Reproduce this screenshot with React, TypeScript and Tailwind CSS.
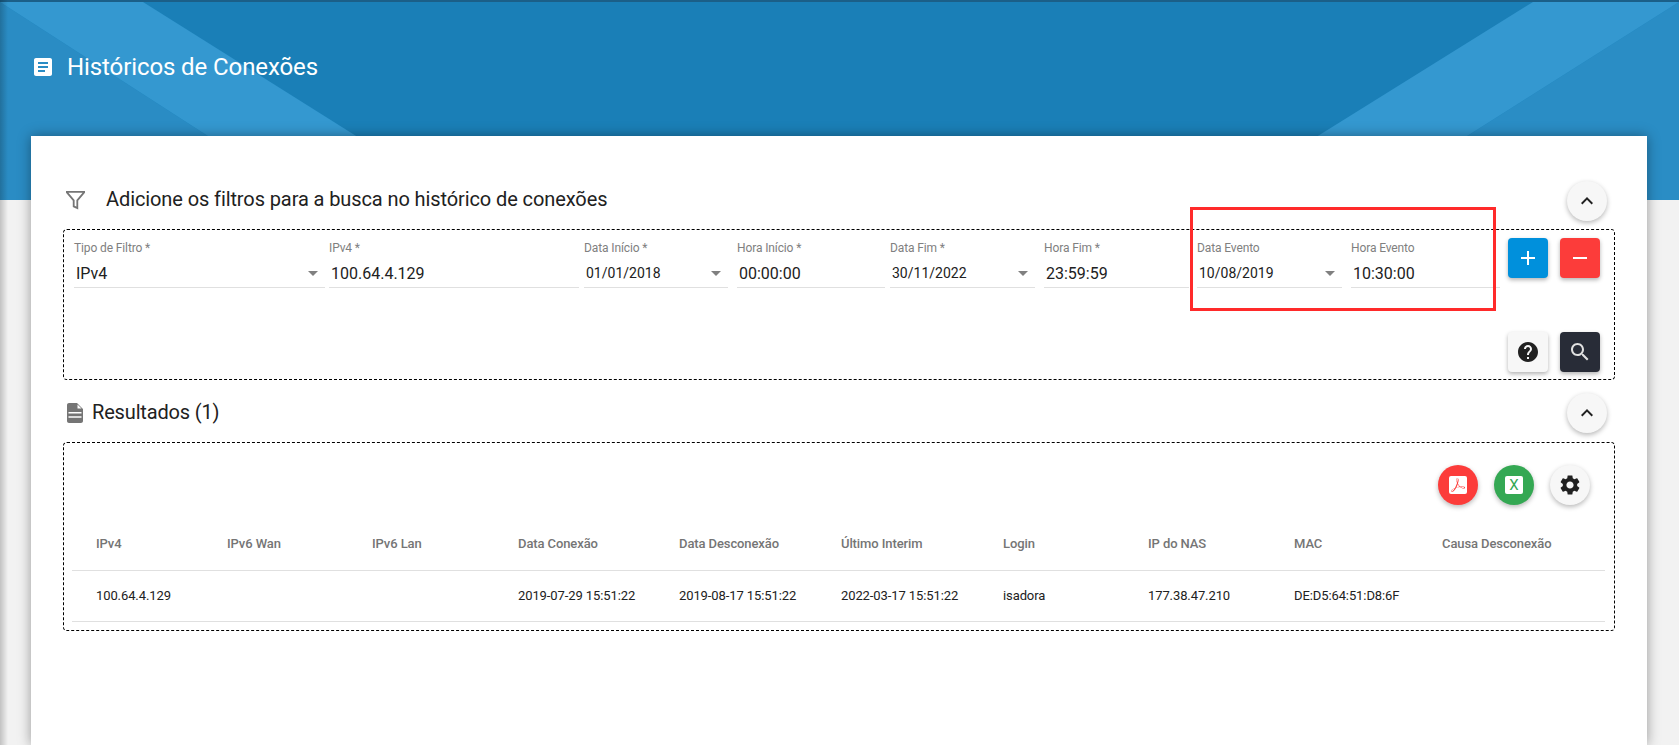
import React from "react";
import { SiAdobeacrobatreader } from "react-icons/si";

const P = {
  article: "M19 3H5c-1.1 0-2 .9-2 2v14c0 1.1.9 2 2 2h14c1.1 0 2-.9 2-2V5c0-1.1-.9-2-2-2zm-5 14H7v-2h7v2zm3-4H7v-2h10v2zm0-4H7V7h10v2z",
  desc: "M6 2h8l6 6v12c0 1.1-.9 2-2 2H6c-1.1 0-2-.9-2-2V4c0-1.1.9-2 2-2zM5.5 11v1.5h13V11h-13zM5.5 15.3v1.5h13v-1.5h-13zM14.5 3.6v4h4l-4-4z",
  help: "M12 2C6.48 2 2 6.48 2 12s4.48 10 10 10 10-4.48 10-10S17.52 2 12 2zm1 17h-2v-2h2v2zm2.07-7.75l-.9.92C13.45 12.9 13 13.5 13 15h-2v-.5c0-1.1.45-2.1 1.17-2.83l1.24-1.26c.37-.36.59-.86.59-1.41 0-1.1-.9-2-2-2s-2 .9-2 2H8c0-2.21 1.79-4 4-4s4 1.79 4 4c0 .88-.36 1.68-.93 2.25z",
  search: "M15.5 14h-.79l-.28-.27C15.41 12.59 16 11.11 16 9.5 16 5.91 13.09 3 9.5 3S3 5.91 3 9.5 5.91 16 9.5 16c1.61 0 3.09-.59 4.23-1.57l.27.28v.79l5 4.99L20.49 19l-4.99-5zm-6 0C7.01 14 5 11.99 5 9.5S7.01 5 9.5 5 14 7.01 14 9.5 11.99 14 9.5 14z",
  gear: "M19.14 12.94c.04-.3.06-.61.06-.94 0-.32-.02-.64-.07-.94l2.03-1.58c.18-.14.23-.41.12-.61l-1.92-3.32c-.12-.22-.37-.29-.59-.22l-2.39.96c-.5-.38-1.03-.7-1.62-.94l-.36-2.54c-.04-.24-.24-.41-.48-.41h-3.84c-.24 0-.43.17-.47.41l-.36 2.54c-.59.24-1.13.57-1.62.94l-2.39-.96c-.22-.08-.47 0-.59.22L2.74 8.87c-.12.21-.08.47.12.61l2.03 1.58c-.05.3-.09.63-.09.94s.02.64.07.94l-2.03 1.58c-.18.14-.23.41-.12.61l1.92 3.32c.12.22.37.29.59.22l2.39-.96c.5.38 1.03.7 1.62.94l.36 2.54c.05.24.24.41.48.41h3.84c.24 0 .44-.17.47-.41l.36-2.54c.59-.24 1.13-.56 1.62-.94l2.39.96c.22.08.47 0 .59-.22l1.92-3.32c.12-.22.07-.47-.12-.61l-2.01-1.58zM12 15.6c-1.98 0-3.6-1.62-3.6-3.6s1.62-3.6 3.6-3.6 3.6 1.62 3.6 3.6-1.62 3.6-3.6 3.6z",
  less: "M12 8l-6 6 1.41 1.41L12 10.83l4.59 4.58L18 14z",
  add: "M19 13h-6v6h-2v-6H5v-2h6V5h2v6h6v2z",
  remove: "M19 13H5v-2h14v2z",
  arrow: "M7 10l5 5 5-5z",
};

function Icon({ d, className }: { d: string; className: string }) {
  return (
    <svg viewBox="0 0 24 24" className={className} fill="currentColor" fillRule="evenodd" aria-hidden="true">
      <path d={d} />
    </svg>
  );
}

function Collapse() {
  return (
    <button className="w-10 h-10 rounded-full bg-[#f7f7f7] shadow-[0_2px_5px_rgba(0,0,0,0.28)] flex items-center justify-center shrink-0 text-[#212121]">
      <Icon d={P.less} className="w-6 h-6" />
    </button>
  );
}

type F = { label: string; value: string; select?: boolean; cls: string };
const fields: F[] = [
  { label: "Tipo de Filtro *", value: "IPv4", select: true, cls: "w-[251px]" },
  { label: "IPv4 *", value: "100.64.4.129", cls: "w-[250px] ml-[4px]" },
  { label: "Data Início *", value: "01/01/2018", select: true, cls: "w-[144px] ml-[5px]" },
  { label: "Hora Início *", value: "00:00:00", cls: "w-[148px] ml-[9px]" },
  { label: "Data Fim *", value: "30/11/2022", select: true, cls: "w-[145px] ml-[5px]" },
  { label: "Hora Fim *", value: "23:59:59", cls: "w-[145px] ml-[9px]" },
  { label: "Data Evento", value: "10/08/2019", select: true, cls: "w-[145px] ml-[8px]" },
  { label: "Hora Evento", value: "10:30:00", cls: "w-[149px] ml-[9px]" },
];

function Field({ f }: { f: F }) {
  const small = f.select && f.value !== "IPv4";
  return (
    <div className={`${f.cls} h-[50px] shrink-0 border-b border-[#e0e0e0]`}>
      <div className="h-[20px] leading-[20px] text-[12px] tracking-[-0.12px] text-[#808080]">{f.label}</div>
      <div className="h-[29px] flex items-center justify-between pl-[2px] text-[#212121]">
        <span className={small ? "pt-[2px] text-[14px]" : "pt-[2px] text-[16px]"}>{f.value}</span>
        {f.select && <Icon d={P.arrow} className="w-6 h-6 text-[#808080]" />}
      </div>
    </div>
  );
}

const heads = ["IPv4", "IPv6 Wan", "IPv6 Lan", "Data Conexão", "Data Desconexão", "Último Interim", "Login", "IP do NAS", "MAC", "Causa Desconexão"];
const cells = ["100.64.4.129", "", "", "2019-07-29 15:51:22", "2019-08-17 15:51:22", "2022-03-17 15:51:22", "isadora", "177.38.47.210", "DE:D5:64:51:D8:6F", ""];

export default function App() {
  return (
    <div className="relative h-[745px] w-[1679px] overflow-hidden bg-[#f2f2f2] font-['Roboto',sans-serif]">
      <header className="relative h-[200px] bg-[#1a7fb7] border-t-2 border-[#1b5f88] overflow-hidden">
        <svg className="absolute inset-0 w-full h-full" viewBox="0 0 1679 200" preserveAspectRatio="none" aria-hidden="true">
          <polygon points="0,0 307,200 0,200" fill="#2a8cc4" />
          <polygon points="0,0 143,0 458,200 307,200" fill="#3498d0" />
          <polygon points="1679,0 1679,200 1366,200" fill="#2a8dc5" />
          <polygon points="1533,0 1679,0 1366,200 1215,200" fill="#3498d0" />
        </svg>
        <div className="relative flex items-center h-[130px] pl-[31px] text-white">
          <Icon d={P.article} className="w-6 h-6" />
          <h1 className="ml-[12px] text-[24px] leading-[32px] tracking-[-0.1px] font-normal">Históricos de Conexões</h1>
        </div>
      </header>

      <main className="relative ml-[31px] -mt-[64px] w-[1616px] h-[609px] bg-white shadow-[0_0_12px_rgba(0,0,0,0.38)] px-[32px] pt-[45px]">
        <div className="flex items-center h-10 pr-[8px]">
          <svg viewBox="1.5 2.5 21 19" className="ml-[3px] mb-[2px] w-[19px] h-[20px] text-[#757575]" fill="none" stroke="currentColor" strokeWidth="2" strokeLinejoin="miter" aria-hidden="true">
            <polygon points="22 3 2 3 10 12.46 10 19 14 21 14 12.46 22 3" />
          </svg>
          <h2 className="ml-[21px] pb-[4px] text-[20px] leading-[28px] tracking-[-0.1px] text-[#212121] font-normal flex-1">Adicione os filtros para a busca no histórico de conexões</h2>
          <Collapse />
        </div>

        <section className="relative mt-2 h-[151px] border border-dashed border-black rounded-[4px] pl-[10px] pr-[14px] pt-[8px]">
          <div className="flex items-start">
            {fields.map((f) => (
              <Field key={f.label} f={f} />
            ))}
            <button className="ml-[8px] w-10 h-10 shrink-0 rounded-[4px] bg-[#0090dc] text-white shadow-[0_2px_4px_rgba(0,0,0,0.3)] flex items-center justify-center">
              <Icon d={P.add} className="w-6 h-6" />
            </button>
            <button className="ml-[12px] w-10 h-10 shrink-0 rounded-[4px] bg-[#fc3c3a] text-white shadow-[0_2px_4px_rgba(0,0,0,0.3)] flex items-center justify-center">
              <Icon d={P.remove} className="w-6 h-6" />
            </button>
          </div>
          <div className="flex justify-end gap-3 mt-[44px]">
            <button className="w-10 h-10 rounded-[4px] bg-[#f7f7f7] text-[#212121] shadow-[0_2px_4px_rgba(0,0,0,0.3)] flex items-center justify-center">
              <Icon d={P.help} className="w-6 h-6" />
            </button>
            <button className="w-10 h-10 rounded-[4px] bg-[#282c37] text-[#e0e0e0] shadow-[0_2px_4px_rgba(0,0,0,0.3)] flex items-center justify-center">
              <Icon d={P.search} className="w-6 h-6" />
            </button>
          </div>
          <div className="absolute left-[1126px] -top-[23px] w-[306px] h-[104px] border-[3px] border-[#ff2a2a] pointer-events-none" />
        </section>

        <div className="flex items-center h-10 mt-[13px] pr-[8px]">
          <Icon d={P.desc} className="w-6 h-6 text-[#757575]" />
          <h2 className="ml-[5px] pb-[2px] text-[20px] leading-[28px] tracking-[-0.16px] text-[#212121] font-normal flex-1">Resultados (1)</h2>
          <Collapse />
        </div>

        <section className="mt-[9px] h-[189px] border border-dashed border-black rounded-[4px] pt-[22px]">
          <div className="flex justify-end gap-4 pr-[24px]">
            <button className="w-10 h-10 rounded-full bg-[#fc3c3a] shadow-[0_2px_5px_rgba(0,0,0,0.28)] flex items-center justify-center">
              <span className="w-[18px] h-[18px] rounded-[2px] bg-white flex items-center justify-center text-[#fc3c3a]">
                <SiAdobeacrobatreader className="w-[14px] h-[14px]" />
              </span>
            </button>
            <button className="w-10 h-10 rounded-full bg-[#34a853] shadow-[0_2px_5px_rgba(0,0,0,0.28)] flex items-center justify-center">
              <span className="w-[18px] h-[18px] rounded-[2px] bg-white flex items-center justify-center text-[#34a853] text-[15px] font-normal leading-none">X</span>
            </button>
            <button className="w-10 h-10 rounded-full bg-[#f7f7f7] text-[#212121] shadow-[0_2px_5px_rgba(0,0,0,0.28)] flex items-center justify-center">
              <Icon d={P.gear} className="w-6 h-6" />
            </button>
          </div>
          <div className="mt-[11px] ml-[8px] mr-[9px] text-[13px] tracking-[-0.1px]">
            <div className="h-[55px] pt-[2px] grid grid-cols-[131px_145px_146px_161px_162px_162px_145px_146px_148px_1fr] items-center pl-[24px] border-b border-[#e0e0e0] font-medium text-[#757575]">
              {heads.map((h) => (
                <div key={h}>{h}</div>
              ))}
            </div>
            <div className="h-[51px] grid grid-cols-[131px_145px_146px_161px_162px_162px_145px_146px_148px_1fr] items-center pl-[24px] border-b border-[#e0e0e0] text-[#212121]">
              {cells.map((c, i) => (
                <div key={i}>{c}</div>
              ))}
            </div>
          </div>
        </section>
      </main>
      <div className="absolute inset-y-0 left-0 w-[8px] bg-gradient-to-r from-black/20 to-transparent pointer-events-none" />
    </div>
  );
}
